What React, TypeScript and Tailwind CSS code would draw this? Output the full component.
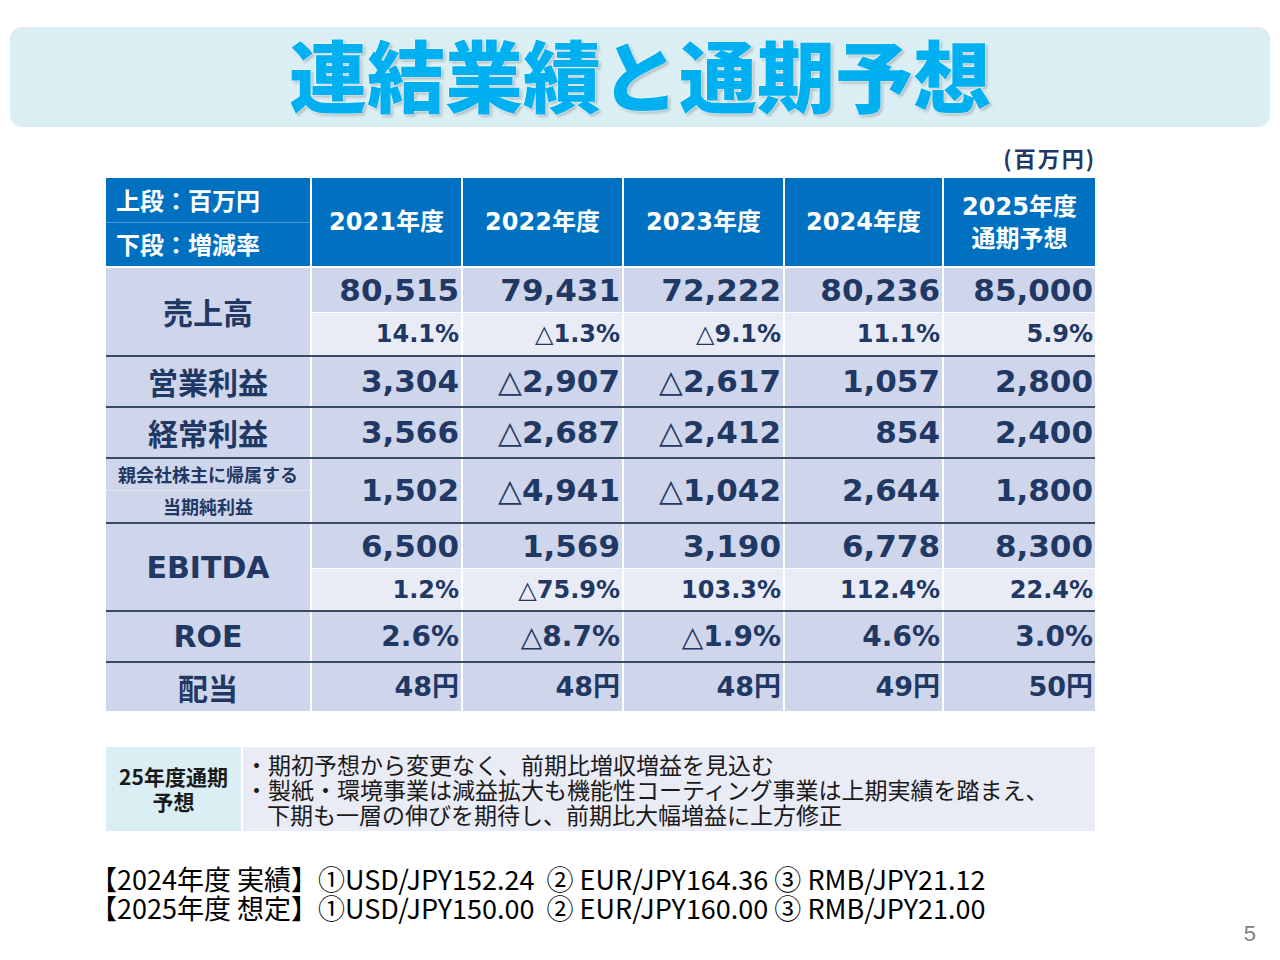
import React from 'react';

const COLS = 'grid grid-cols-[204px_151px_161px_161px_159px_153px]';
const NUM = "font-['DejaVu_Sans','Noto_Sans_CJK_JP',sans-serif] font-bold text-[#1f3864]";
const JP = "font-['Noto_Sans_CJK_JP',sans-serif]";

type Row = {
  label: React.ReactNode;
  nums: string[];
  pcts?: string[];
  tracks?: string;
  size?: string;
  h?: string;
};

const rows: Row[] = [
  {
    label: <span className="text-[30px]">売上高</span>,
    nums: ['80,515', '79,431', '72,222', '80,236', '85,000'],
    pcts: ['14.1%', '△1.3%', '△9.1%', '11.1%', '5.9%'],
    tracks: 'grid-rows-[44px_43px]',
  },
  {
    label: <span className="text-[30px]">営業利益</span>,
    nums: ['3,304', '△2,907', '△2,617', '1,057', '2,800'],
  },
  {
    label: <span className="text-[30px]">経常利益</span>,
    nums: ['3,566', '△2,687', '△2,412', '854', '2,400'],
  },
  {
    label: (
      <div className="flex h-full w-full flex-col text-[18px]">
        <div className="flex flex-1 items-center justify-center border-b border-[#e3e7f0]">親会社株主に帰属する</div>
        <div className="flex flex-1 items-center justify-center">当期純利益</div>
      </div>
    ),
    nums: ['1,502', '△4,941', '△1,042', '2,644', '1,800'],
    h: 'h-[65px]',
  },
  {
    label: <span className="font-['DejaVu_Sans',sans-serif] text-[30px]">EBITDA</span>,
    nums: ['6,500', '1,569', '3,190', '6,778', '8,300'],
    pcts: ['1.2%', '△75.9%', '103.3%', '112.4%', '22.4%'],
    tracks: 'grid-rows-[44px_42px]',
  },
  {
    label: <span className="font-['DejaVu_Sans',sans-serif] text-[30px]">ROE</span>,
    nums: ['2.6%', '△8.7%', '△1.9%', '4.6%', '3.0%'],
    size: 'text-[28px]',
  },
  {
    label: <span className="text-[30px]">配当</span>,
    nums: ['48円', '48円', '48円', '49円', '50円'],
    size: 'text-[27px]',
    h: 'h-[50px]',
  },
];

const years = ['2021年度', '2022年度', '2023年度', '2024年度'];

function TableRow({ row, first }: { row: Row; first: boolean }) {
  const border = first ? 'border-white' : 'border-[#3b4a63]';
  const label = (
    <div
      className={`${JP} ${row.pcts ? 'row-span-2' : ''} flex items-center justify-center bg-[#cfd5ea] font-bold text-[#1f3864]`}
    >
      {row.label}
    </div>
  );

  if (row.pcts) {
    return (
      <div className={`${COLS} ${row.tracks} border-t-2 ${border}`}>
        {label}
        {row.nums.map((n, i) => (
          <div key={'n' + i} className={`${NUM} flex items-center justify-end border-l-2 border-white bg-[#cfd5ea] pr-[2px] text-[31px]`}>
            {n}
          </div>
        ))}
        {row.pcts.map((p, i) => (
          <div key={'p' + i} className={`${NUM} flex items-center justify-end border-l-2 border-t border-white bg-[#e9ebf5] pr-[2px] text-[24px]`}>
            {p}
          </div>
        ))}
      </div>
    );
  }

  return (
    <div className={`${COLS} ${row.h ?? 'h-[51px]'} border-t-2 ${border}`}>
      {label}
      {row.nums.map((n, i) => (
        <div key={i} className={`${NUM} flex items-center justify-end border-l-2 border-white bg-[#cfd5ea] pr-[2px] ${row.size ?? 'text-[31px]'}`}>
          {n}
        </div>
      ))}
    </div>
  );
}

export default function App() {
  return (
    <div className="relative h-[960px] w-[1280px] overflow-hidden bg-white">
      {/* title */}
      <div className="mx-[10px] mt-[27px] flex h-[100px] items-center justify-center rounded-[12px] bg-[#daeef3] pb-[8px]">
        <h1
          className={`${JP} text-[78px] leading-none font-black text-[#00b0f0] [text-shadow:0_0_2px_#fff,0_0_2px_#fff,2px_2px_3px_rgba(0,0,0,0.25)]`}
        >
          連結業績と通期予想
        </h1>
      </div>

      <div className="flex h-[51px] items-center justify-end pt-[10px] pr-[184px]">
        <span className={`${JP} text-[22px] font-bold tracking-[2px] text-[#1f3864]`}>(百万円)</span>
      </div>

      {/* table */}
      <div className="ml-[106px] w-[989px]">
        <div className={`${COLS} h-[88px] bg-[#0070c0] text-white`}>
          <div className={`${JP} flex flex-col text-[24px] font-bold`}>
            <div className="flex flex-1 items-center border-b border-[#4f93d2] pl-[10px]">上段：百万円</div>
            <div className="flex flex-1 items-center pl-[10px]">下段：増減率</div>
          </div>
          {years.map((y) => (
            <div key={y} className={`${NUM} flex items-center justify-center border-l-2 border-white text-[24px] !text-white`}>
              {y}
            </div>
          ))}
          <div className={`${NUM} flex flex-col items-center justify-center border-l-2 border-white text-[24px] leading-[29px] !text-white`}>
            <span>2025年度</span>
            <span className={JP}>通期予想</span>
          </div>
        </div>
        {rows.map((r, i) => (
          <TableRow key={i} row={r} first={i === 0} />
        ))}
      </div>

      {/* outlook box */}
      <div className="mt-[36px] ml-[106px] flex h-[84px] w-[989px]">
        <div className={`${JP} flex w-[135px] flex-col items-center justify-center bg-[#daeef3] text-[21px] leading-[25px] font-bold text-[#1a1a1a]`}>
          <span>25年度通期</span>
          <span>予想</span>
        </div>
        <div className={`${JP} ml-[2px] flex flex-1 flex-col justify-center bg-[#e9ebf5] pl-[2px] text-[23px] leading-[25px] text-[#1a1a1a]`}>
          <span>・期初予想から変更なく、前期比増収増益を見込む</span>
          <span>・製紙・環境事業は減益拡大も機能性コーティング事業は上期実績を踏まえ、</span>
          <span className="pl-[22px]">下期も一層の伸びを期待し、前期比大幅増益に上方修正</span>
        </div>
      </div>

      {/* exchange rates */}
      <div className={`${JP} mt-[33px] ml-[90px] text-[27px] leading-[29px] text-black`}>
        <div className="whitespace-pre">【2024年度 実績】①USD/JPY152.24  ② EUR/JPY164.36 ③ RMB/JPY21.12</div>
        <div className="whitespace-pre">【2025年度 想定】①USD/JPY150.00  ② EUR/JPY160.00 ③ RMB/JPY21.00</div>
      </div>

      <div className="flex justify-end pr-[24px]">
        <span className="font-['Liberation_Sans_Narrow','Liberation_Sans',sans-serif] text-[22px] leading-[24px] text-[#808080]">5</span>
      </div>
    </div>
  );
}
